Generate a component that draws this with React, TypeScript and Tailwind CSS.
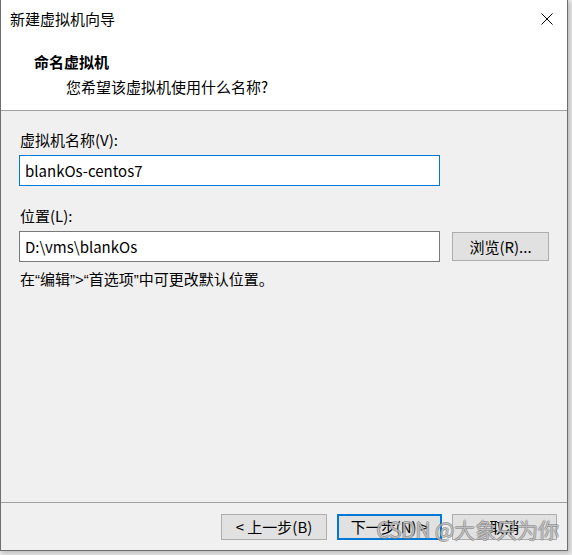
import React from 'react';

const font = { fontFamily: '"Noto Sans CJK SC", "Noto Sans", sans-serif' };

function CloseIcon() {
  return (
    <svg width="12" height="12" viewBox="0 0 12 12" className="block">
      <path d="M0.5 0.5 L11.5 11.5 M11.5 0.5 L0.5 11.5" stroke="#000" strokeWidth="1" fill="none" />
    </svg>
  );
}

// narrow quote marks, like the Segoe UI ones in the dialog
function Q({ c }: { c: string }) {
  return <span className="font-['Liberation_Sans',sans-serif]">{c}</span>;
}

export default function App() {
  return (
    <div className="w-[572px] h-[555px] bg-[#e6e6e6] overflow-hidden text-[15px] text-black leading-[20px]" style={font}>
      <div className="relative w-[568px] h-[551px] flex flex-col border-l border-r border-b border-[#6f6f6f] bg-[#f0f0f0] shadow-[2px_2px_4px_rgba(0,0,0,0.18)]">
        {/* Title bar + header */}
        <div className="h-[111px] bg-white border-b border-[#a0a0a0] flex flex-col">
          <div className="h-[38px] flex items-center justify-between pl-[9px] pr-[14px]">
            <span>新建虚拟机向导</span>
            <CloseIcon />
          </div>
          <div className="pl-[33px] pt-[14px] font-bold">命名虚拟机</div>
          <div className="pl-[65px] pt-[5px]">您希望该虚拟机使用什么名称?</div>
        </div>

        {/* Body */}
        <div className="flex-1 flex flex-col pl-[18px] pt-[19px]">
          <div className="pl-[1px]">虚拟机名称(V):</div>
          <div className="mt-[5px] w-[421px] h-[31px] border border-[#0078d7] bg-white flex items-center pl-[5px]">
            blankOs-centos7
          </div>
          <div className="mt-[20px] pl-[1px]">位置(L):</div>
          <div className="mt-[5px] flex items-start">
            <div className="w-[421px] h-[31px] border border-[#7a7a7a] bg-white flex items-center pl-[5px]">
              D:\vms\blankOs
            </div>
            <button className="ml-[12px] mt-[1px] w-[97px] h-[29px] bg-[#e1e1e1] border border-[#adadad] flex items-center justify-center">
              浏览(R)...
            </button>
          </div>
          <div className="mt-[7px] pl-[1px]">
            在<Q c="“" />编辑<Q c="”>“" />首选项<Q c="”" />中可更改默认位置。
          </div>
        </div>

        {/* Footer */}
        <div className="h-[48px] border-t border-[#a0a0a0] flex justify-end items-start gap-[10px] pt-[11px] pr-[10px]">
          <button className="w-[106px] h-[26px] bg-[#e1e1e1] border border-[#adadad] flex items-center justify-center">
            &lt; 上一步(B)
          </button>
          <button className="w-[105px] h-[26px] bg-[#e1e1e1] border-2 border-[#0078d7] flex items-center justify-center">
            下一步(N) &gt;
          </button>
          <button className="w-[105px] h-[26px] bg-[#e1e1e1] border border-[#adadad] flex items-center justify-center">
            取消
          </button>
        </div>

        {/* Watermark */}
        <div className="absolute right-[8px] bottom-[7px] text-[21px] leading-[28px] font-light text-[rgba(250,250,250,0.5)] [text-shadow:1px_0_0_rgba(120,120,120,0.6),-1px_0_0_rgba(120,120,120,0.6),0_1px_0_rgba(120,120,120,0.6),0_-1px_0_rgba(120,120,120,0.6)] pointer-events-none whitespace-nowrap">
          CSDN @大象只为你
        </div>
      </div>
    </div>
  );
}
